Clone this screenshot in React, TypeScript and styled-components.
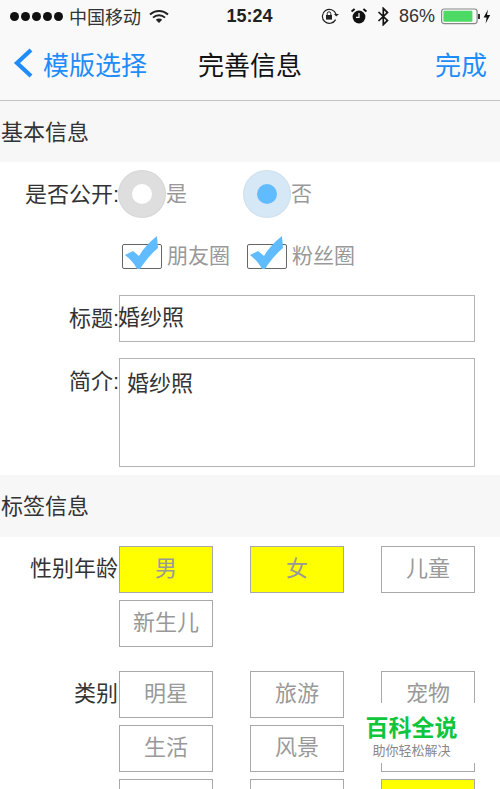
import React from 'react'
import styled, { createGlobalStyle } from 'styled-components'

const GlobalStyle = createGlobalStyle`
  html, body { margin: 0; padding: 0; background: #fff; }
  body { font-family: "Liberation Sans", "Noto Sans CJK SC", sans-serif; }
`
const Page = styled.div`
  position: relative;
  width: 500px;
  height: 789px;
  overflow: hidden;
  background: #fff;
`
const TopBar = styled.div`
  height: 100px;
  background: #f9f9f9;
  border-bottom: 1px solid #c4c4c4;
`
const StatusBar = styled.div`
  height: 32px;
  display: grid;
  grid-template-columns: 1fr auto 1fr;
  align-items: center;
  color: #222;
`
const StatusLeft = styled.div`
  display: flex;
  align-items: center;
  padding-left: 10px;
  font-size: 18px;
  color: #333;
`
const Dots = styled.div`
  display: flex;
  gap: 2px;
  margin-right: 6px;
`
const Dot = styled.span`
  width: 9px;
  height: 9px;
  border-radius: 50%;
  background: #111;
`
const Time = styled.div`
  font-size: 18px;
  font-weight: 700;
  padding-right: 1px;
`
const StatusRight = styled.div`
  display: flex;
  align-items: center;
  justify-content: flex-end;
  padding-right: 6px;
  font-size: 18px;
  color: #333;
`
const BatteryText = styled.span`
  margin-left: 9px;
`
const NavBar = styled.div`
  height: 68px;
  display: grid;
  grid-template-columns: 186px 1fr auto;
  align-items: center;
  padding: 0 13px 6px 12px;
  box-sizing: border-box;
`
const BackLink = styled.div`
  display: flex;
  align-items: center;
  gap: 9px;
  color: #1f8cfa;
  font-size: 26px;
`
const NavTitle = styled.div`
  font-size: 26px;
  color: #111;
`
const NavAction = styled.div`
  color: #1f8cfa;
  font-size: 26px;
`
const SectionHeader = styled.div<{ $height: number; $top?: number }>`
  height: ${({ $height }) => $height}px;
  margin-top: ${({ $top }) => $top || 0}px;
  background: #f7f7f7;
  display: flex;
  align-items: center;
  padding-left: 1px;
  padding-bottom: 4px;
  box-sizing: border-box;
  font-size: 22px;
  color: #333;
`
const Row = styled.div<{ $height: number; $top?: number; $align?: string }>`
  display: flex;
  align-items: ${({ $align }) => $align || 'center'};
  height: ${({ $height }) => $height}px;
  margin-top: ${({ $top }) => $top || 0}px;
`
const Label = styled.div<{ $pad?: number; $lift?: number }>`
  width: 119px;
  flex: none;
  text-align: right;
  font-size: 22px;
  color: #333;
  white-space: nowrap;
  padding-top: ${({ $pad }) => $pad || 0}px;
  padding-bottom: ${({ $lift }) => $lift || 0}px;
`
const Radio = styled.div<{ $on?: boolean }>`
  width: 48px;
  height: 48px;
  margin-left: -1px;
  flex: none;
  border-radius: 50%;
  background: ${({ $on }) => ($on ? '#d6e8f5' : '#dedede')};
  box-shadow: inset 0 0 2px rgba(0, 0, 0, 0.1);
  display: flex;
  align-items: center;
  justify-content: center;
`
const RadioInner = styled.div<{ $on?: boolean }>`
  width: 20px;
  height: 20px;
  border-radius: 50%;
  background: ${({ $on }) => ($on ? '#61bcff' : '#fff')};
`
const OptionText = styled.span<{ $width?: number; $lift?: number }>`
  font-size: 21px;
  color: #999;
  width: ${({ $width }) => ($width ? `${$width}px` : 'auto')};
  padding-bottom: ${({ $lift }) => $lift || 0}px;
  flex: none;
`
const CheckWrap = styled.div`
  position: relative;
  width: 40px;
  height: 25px;
  flex: none;
  margin: 4px 5px 0 3px;
  border: 1px solid #666;
  border-radius: 2px;
  box-sizing: border-box;
  background: #fff;
`
const CheckMark = styled.svg`
  position: absolute;
  left: 2px;
  top: -9px;
`
const CheckOption = styled.div`
  display: flex;
  align-items: center;
  width: 125px;
`
const InputBox = styled.div<{ $height: number; $pad?: number; $top?: number }>`
  width: 356px;
  height: ${({ $height }) => $height}px;
  box-sizing: border-box;
  border: 1px solid #b4b4b4;
  background: #fff;
  font-size: 22px;
  color: #333;
  padding-left: ${({ $pad }) => $pad || 0}px;
  padding-top: ${({ $top }) => $top || 0}px;
`
const FlushText = styled.span`
  margin-left: -2px;
`
const TagRows = styled.div`
  display: flex;
  flex-direction: column;
  gap: 7px;
`
const TagRow = styled.div`
  display: flex;
  gap: 37px;
`
const Tag = styled.div<{ $active?: boolean }>`
  width: 94px;
  height: 47px;
  box-sizing: border-box;
  border: 1px solid #a8a8a8;
  background: ${({ $active }) => ($active ? '#ffff00' : '#fff')};
  color: #999;
  font-size: 22px;
  display: flex;
  align-items: center;
  justify-content: center;
  padding-bottom: 7px;
`
const TagGroup = styled.div<{ $top: number }>`
  display: flex;
  margin-top: ${({ $top }) => $top}px;
`
const TagLabel = styled(Label)`
  width: 118px;
  margin-right: 1px;
  padding-top: 4px;
`
const Watermark = styled.div`
  position: absolute;
  left: 347px;
  top: 703px;
  width: 129px;
  height: 60px;
  background: #fff;
  display: flex;
  flex-direction: column;
  align-items: center;
`
const WatermarkTitle = styled.div`
  font-size: 23px;
  line-height: 28px;
  font-weight: 700;
  color: #0fc53c;
  margin-top: 11px;
`
const WatermarkSub = styled.div`
  font-size: 13px;
  line-height: 18px;
  color: #888;
`

const WifiIcon = () => (
  <svg width="20" height="15" viewBox="0 0 20 15" style={{ marginLeft: 8 }}>
    <path d="M1 5.5a13 13 0 0 1 18 0" fill="none" stroke="#222" strokeWidth="2" />
    <path d="M4 8.6a8.6 8.6 0 0 1 12 0" fill="none" stroke="#222" strokeWidth="2" />
    <path d="M10 14l-3.2-3.2a4.6 4.6 0 0 1 6.4 0z" fill="#222" />
  </svg>
)
const LockIcon = () => (
  <svg width="19" height="16" viewBox="0 0 19 16">
    <path d="M14.6 11.6A7 7 0 1 1 15 6" fill="none" stroke="#222" strokeWidth="1.2" />
    <path d="M13 6l2.2 2.6L18 6z" fill="#222" />
    <rect x="5" y="7" width="6" height="4.6" fill="#222" />
    <path d="M6.2 7V5.6a1.8 1.8 0 0 1 3.6 0V7" fill="none" stroke="#222" strokeWidth="1" />
  </svg>
)
const AlarmIcon = () => (
  <svg width="16" height="16" viewBox="0 0 16 16" style={{ marginLeft: 11 }}>
    <circle cx="8" cy="9" r="6.4" fill="#111" />
    <path d="M8 5v4.4H5" fill="none" stroke="#fff" strokeWidth="1.2" />
    <path d="M0.6 3.6L3.6 1M15.4 3.6L12.4 1" stroke="#111" strokeWidth="2" />
  </svg>
)
const BluetoothIcon = () => (
  <svg width="13" height="19" viewBox="0 0 13 19" style={{ marginLeft: 10 }}>
    <path d="M1.5 5l9 8.4L6.3 17.6V1.4l4.2 4.2L1.5 14" fill="none" stroke="#111" strokeWidth="1.7" />
  </svg>
)
const BatteryIcon = () => (
  <svg width="53" height="17" viewBox="0 0 53 17" style={{ marginLeft: 6 }}>
    <rect x="0.6" y="1" width="35.5" height="14.6" rx="2.5" fill="none" stroke="#888" strokeWidth="1.2" />
    <rect x="2.4" y="2.8" width="29" height="11" rx="1" fill="#4cd964" />
    <rect x="37" y="6" width="2" height="5" fill="#333" />
    <path d="M47 1.5l-4.4 8h3l-1 6 4.6-8.4h-3.2z" fill="#111" />
  </svg>
)
const BackChevron = () => (
  <svg width="22" height="32" viewBox="0 0 22 32">
    <path d="M19 3L5 16l14 13" fill="none" stroke="#1f8cfa" strokeWidth="4.2" />
  </svg>
)
const Check = () => (
  <CheckMark width="34" height="33" viewBox="0 0 34 33">
    <path d="M0 19l8-4 6 5C18 13 24 6 32 0l1 12C26 18 20 25 15 33h-3C9 27 5 23 0 19z" fill="#61bcff" />
  </CheckMark>
)

const categoryRows = [
  [['明星'], ['旅游'], ['宠物']],
  [['生活'], ['风景'], ['']],
  [[''], [''], ['', true]],
] as [string, boolean?][][]

const App: React.FC = () => (
  <Page>
    <GlobalStyle />
    <TopBar>
      <StatusBar>
        <StatusLeft>
          <Dots>
            {[0, 1, 2, 3, 4].map((i) => (
              <Dot key={i} />
            ))}
          </Dots>
          中国移动
          <WifiIcon />
        </StatusLeft>
        <Time>15:24</Time>
        <StatusRight>
          <LockIcon />
          <AlarmIcon />
          <BluetoothIcon />
          <BatteryText>86%</BatteryText>
          <BatteryIcon />
        </StatusRight>
      </StatusBar>
      <NavBar>
        <BackLink>
          <BackChevron />
          模版选择
        </BackLink>
        <NavTitle>完善信息</NavTitle>
        <NavAction>完成</NavAction>
      </NavBar>
    </TopBar>

    <SectionHeader $height={61}>基本信息</SectionHeader>
    <Row $height={48} $top={8}>
      <Label $lift={4}>是否公开:</Label>
      <Radio>
        <RadioInner />
      </Radio>
      <OptionText $width={78} $lift={4}>
        是
      </OptionText>
      <Radio $on>
        <RadioInner $on />
      </Radio>
      <OptionText $lift={4}>否</OptionText>
    </Row>
    <Row $height={36} $top={18}>
      <Label />
      <CheckOption>
        <CheckWrap>
          <Check />
        </CheckWrap>
        <OptionText>朋友圈</OptionText>
      </CheckOption>
      <CheckOption>
        <CheckWrap>
          <Check />
        </CheckWrap>
        <OptionText>粉丝圈</OptionText>
      </CheckOption>
    </Row>
    <Row $height={47} $top={23} $align="flex-start">
      <Label $pad={5}>标题:</Label>
      <InputBox $height={47} $top={3}>
        <FlushText>婚纱照</FlushText>
      </InputBox>
    </Row>
    <Row $height={109} $top={16} $align="flex-start">
      <Label $pad={5}>简介:</Label>
      <InputBox $height={109} $pad={7} $top={6}>
        婚纱照
      </InputBox>
    </Row>

    <SectionHeader $height={62} $top={8}>
      标签信息
    </SectionHeader>
    <TagGroup $top={9}>
      <TagLabel>性别年龄</TagLabel>
      <TagRows>
        <TagRow>
          <Tag $active>男</Tag>
          <Tag $active>女</Tag>
          <Tag>儿童</Tag>
        </TagRow>
        <TagRow>
          <Tag>新生儿</Tag>
        </TagRow>
      </TagRows>
    </TagGroup>
    <TagGroup $top={24}>
      <TagLabel>类别</TagLabel>
      <TagRows>
        {categoryRows.map((row, i) => (
          <TagRow key={i}>
            {row.map(([text, active], j) => (
              <Tag key={j} $active={active}>
                {text}
              </Tag>
            ))}
          </TagRow>
        ))}
      </TagRows>
    </TagGroup>

    <Watermark>
      <WatermarkTitle>百科全说</WatermarkTitle>
      <WatermarkSub>助你轻松解决</WatermarkSub>
    </Watermark>
  </Page>
)

export default App
